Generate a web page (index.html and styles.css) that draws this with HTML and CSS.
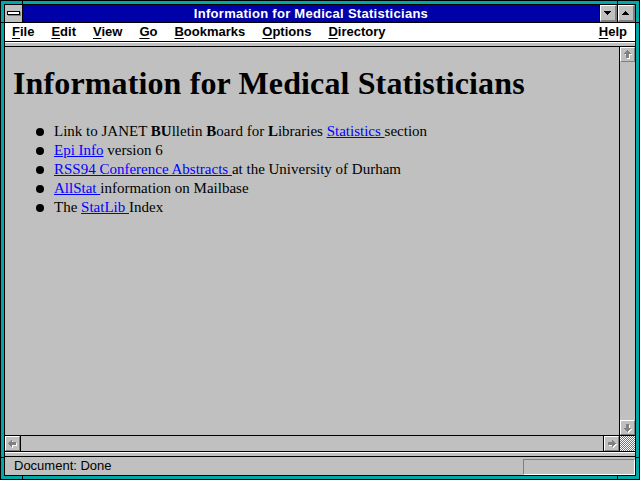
FILE: index.html
```html
<!DOCTYPE html>
<html>
<head>
<meta charset="utf-8">
<title>Information for Medical Statisticians</title>
<link rel="stylesheet" href="styles.css">
</head>
<body>
<svg class="defs" width="0" height="0" aria-hidden="true">
  <defs>
    <g id="ar">
      <rect x="6" y="2" width="1" height="1"/>
      <rect x="5" y="3" width="3" height="1"/>
      <rect x="4" y="4" width="5" height="1"/>
      <rect x="3" y="5" width="7" height="1"/>
      <rect x="5" y="6" width="3" height="4"/>
    </g>
  </defs>
</svg>
<div class="window">
  <div class="frame">
    <div class="inner">
      <div class="titlebar">
        <div class="sysmenu"><span class="sysbar"></span></div>
        <div class="title">Information for Medical Statisticians</div>
        <div class="tbtn"><div class="face"><svg class="tri" viewBox="0 0 14 14" shape-rendering="crispEdges"><rect x="3" y="5" width="7" height="1"/><rect x="4" y="6" width="5" height="1"/><rect x="5" y="7" width="3" height="1"/><rect x="6" y="8" width="1" height="1"/></svg></div></div>
        <div class="tbtn"><div class="face"><svg class="tri" viewBox="0 0 14 14" shape-rendering="crispEdges"><rect x="6" y="5" width="1" height="1"/><rect x="5" y="6" width="3" height="1"/><rect x="4" y="7" width="5" height="1"/><rect x="3" y="8" width="7" height="1"/></svg></div></div>
      </div>
      <div class="menubar">
        <span class="mi"><u>F</u>ile</span>
        <span class="mi"><u>E</u>dit</span>
        <span class="mi"><u>V</u>iew</span>
        <span class="mi"><u>G</u>o</span>
        <span class="mi"><u>B</u>ookmarks</span>
        <span class="mi"><u>O</u>ptions</span>
        <span class="mi"><u>D</u>irectory</span>
        <span class="mi help"><u>H</u>elp</span>
      </div>
      <div class="strip"></div>
      <div class="viewport">
        <div class="doc">
          <h1>Information for Medical Statisticians</h1>
          <ul>
            <li>Link to JANET <b>BU</b>lletin <b>B</b>oard for <b>L</b>ibraries <a href="#">Statistics </a>section</li>
            <li><a href="#">Epi Info</a> version 6</li>
            <li><a href="#">RSS94 Conference Abstracts </a>at the University of Durham</li>
            <li><a href="#">AllStat </a>information on Mailbase</li>
            <li>The <a href="#">StatLib </a>Index</li>
          </ul>
        </div>
        <div class="vscroll">
          <div class="sbtn"><svg class="arr" viewBox="0 0 13 13" shape-rendering="crispEdges"><use href="#ar" transform="translate(1 1)" fill="#fff"/><use href="#ar" fill="#808080"/></svg></div>
          <div class="vtrack"></div>
          <div class="sbtn"><svg class="arr" viewBox="0 0 13 13" shape-rendering="crispEdges"><use href="#ar" transform="translate(1 1) rotate(180 6.5 6.5)" fill="#fff"/><use href="#ar" transform="rotate(180 6.5 6.5)" fill="#808080"/></svg></div>
        </div>
      </div>
      <div class="hscroll">
        <div class="sbtn left"><svg class="arr" viewBox="0 0 13 13" shape-rendering="crispEdges"><use href="#ar" transform="translate(1 1) rotate(-90 6.5 6.5)" fill="#fff"/><use href="#ar" transform="rotate(-90 6.5 6.5)" fill="#808080"/></svg></div>
        <div class="htrack"></div>
        <div class="sbtn right"><svg class="arr" viewBox="0 0 13 13" shape-rendering="crispEdges"><use href="#ar" transform="translate(1 1) rotate(90 6.5 6.5)" fill="#fff"/><use href="#ar" transform="rotate(90 6.5 6.5)" fill="#808080"/></svg></div>
        <div class="corner"></div>
      </div>
      <div class="strip"></div>
      <div class="status">
        <span class="stext">Document: Done</span>
        <span class="statbox"></span>
      </div>
    </div>
  </div>
  <span class="notch v" style="left:22px;top:1px"></span>
  <span class="notch v" style="left:617px;top:1px"></span>
  <span class="notch v" style="left:22px;top:476px"></span>
  <span class="notch v" style="left:617px;top:476px"></span>
  <span class="notch h" style="left:1px;top:22px"></span>
  <span class="notch h" style="left:636px;top:22px"></span>
  <span class="notch h" style="left:1px;top:457px"></span>
  <span class="notch h" style="left:636px;top:457px"></span>
</div>
</body>
</html>
```
FILE: styles.css
```css
html, body {
  margin: 0;
  padding: 0;
}
body {
  width: 640px;
  height: 480px;
  overflow: hidden;
  background: #000;
}
.defs {
  position: absolute;
  width: 0;
  height: 0;
}
.window {
  position: relative;
  width: 640px;
  height: 480px;
  box-sizing: border-box;
  padding: 1px;
  background: #000;
}
.frame {
  height: 100%;
  box-sizing: border-box;
  padding: 3px;
  background: #00a8a8;
}
.inner {
  height: 100%;
  box-sizing: border-box;
  border: 1px solid #000;
  background: #c0c0c0;
  display: flex;
  flex-direction: column;
}
.notch {
  position: absolute;
  background: #000;
}
.notch.v { width: 1px; height: 3px; }
.notch.h { width: 3px; height: 1px; }

/* title bar */
.titlebar {
  flex: none;
  height: 18px;
  box-sizing: border-box;
  border-bottom: 1px solid #000;
  display: flex;
}
.sysmenu {
  width: 18px;
  box-sizing: border-box;
  border-right: 1px solid #000;
  background: #c0c0c0;
  display: flex;
  align-items: center;
  justify-content: center;
}
.sysbar {
  display: block;
  width: 11px;
  height: 2px;
  background: #fff;
  border: 1px solid #000;
  box-shadow: 1px 1px 0 #808080;
  margin-top: -1px;
}
.title {
  flex: 1;
  background: #0000a8;
  color: #fff;
  font: bold 13px/17px "Liberation Sans", Arial, sans-serif;
  letter-spacing: 0.28px;
  text-align: center;
  white-space: nowrap;
}
.tbtn {
  width: 18px;
  box-sizing: border-box;
  border-left: 1px solid #000;
}
.face {
  width: 17px;
  height: 17px;
  box-sizing: border-box;
  background: #c0c0c0;
  border-top: 1px solid #fff;
  border-left: 1px solid #fff;
  border-right: 2px solid #808080;
  border-bottom: 2px solid #808080;
}
.tri {
  display: block;
  width: 14px;
  height: 14px;
  fill: #000;
}

/* menu bar */
.menubar {
  flex: none;
  height: 19px;
  box-sizing: border-box;
  border-bottom: 1px solid #000;
  background: #fff;
  display: flex;
  align-items: center;
  gap: 17px;
  padding-left: 7px;
  padding-right: 8px;
  font: bold 13px/18px "Liberation Sans", Arial, sans-serif;
  color: #000;
}
.mi u {
  text-underline-offset: 2px;
}
.help {
  margin-left: auto;
}

.strip {
  flex: none;
  height: 5px;
  box-sizing: border-box;
  border-top: 1px solid #fff;
  border-bottom: 1px solid #000;
  background: #c0c0c0;
}

/* document area */
.viewport {
  flex: 1;
  display: flex;
  min-height: 0;
}
.doc {
  flex: 1;
  padding: 18px 0 0 8px;
  font-family: "Liberation Serif", "Times New Roman", serif;
  color: #000;
}
.doc h1 {
  margin: 0 0 21px 0;
  font: bold 32px/36px "Liberation Serif", "Times New Roman", serif;
  letter-spacing: 0.13px;
  white-space: nowrap;
}
.doc ul {
  margin: 0;
  padding: 0;
  list-style: none;
}
.doc li {
  position: relative;
  padding-left: 41px;
  font-size: 15px;
  line-height: 19px;
  white-space: nowrap;
}
.doc li::before {
  content: "";
  position: absolute;
  left: 23px;
  top: 6px;
  width: 8px;
  height: 8px;
  border-radius: 50%;
  background: #000;
}
.doc a {
  color: #0000ff;
  text-decoration: underline;
}

/* scrollbars */
.vscroll {
  width: 16px;
  box-sizing: border-box;
  border-left: 1px solid #000;
  display: flex;
  flex-direction: column;
}
.vtrack { flex: 1; }
.sbtn {
  width: 15px;
  height: 15px;
  box-sizing: border-box;
  background: #c0c0c0;
  border-top: 1px solid #fff;
  border-left: 1px solid #fff;
  border-right: 1px solid #808080;
  border-bottom: 1px solid #808080;
  flex: none;
}
.arr {
  display: block;
  width: 13px;
  height: 13px;
}
.hscroll {
  flex: none;
  height: 17px;
  box-sizing: border-box;
  border-top: 1px solid #000;
  border-bottom: 1px solid #000;
  display: flex;
}
.sbtn.left {
  box-shadow: 1px 0 0 #000;
  margin-right: 1px;
}
.sbtn.right {
  box-shadow: -1px 0 0 #000;
  margin-left: 1px;
}
.htrack { flex: 1; }
.corner {
  width: 16px;
  box-sizing: border-box;
  border-left: 1px solid #000;
  background: repeating-conic-gradient(#00a8a8 0 25%, #fff 0 50%) 0 0 / 2px 2px;
}

/* status bar */
.status {
  flex: none;
  height: 18px;
  display: flex;
  align-items: center;
  padding-left: 9px;
  font: 13px/16px "Liberation Sans", Arial, sans-serif;
  color: #000;
}
.statbox {
  margin-left: auto;
  align-self: flex-end;
  width: 112px;
  height: 16px;
  box-sizing: border-box;
  border-top: 1px solid #808080;
  border-left: 1px solid #808080;
  border-right: 1px solid #fff;
  border-bottom: 1px solid #fff;
}
```
